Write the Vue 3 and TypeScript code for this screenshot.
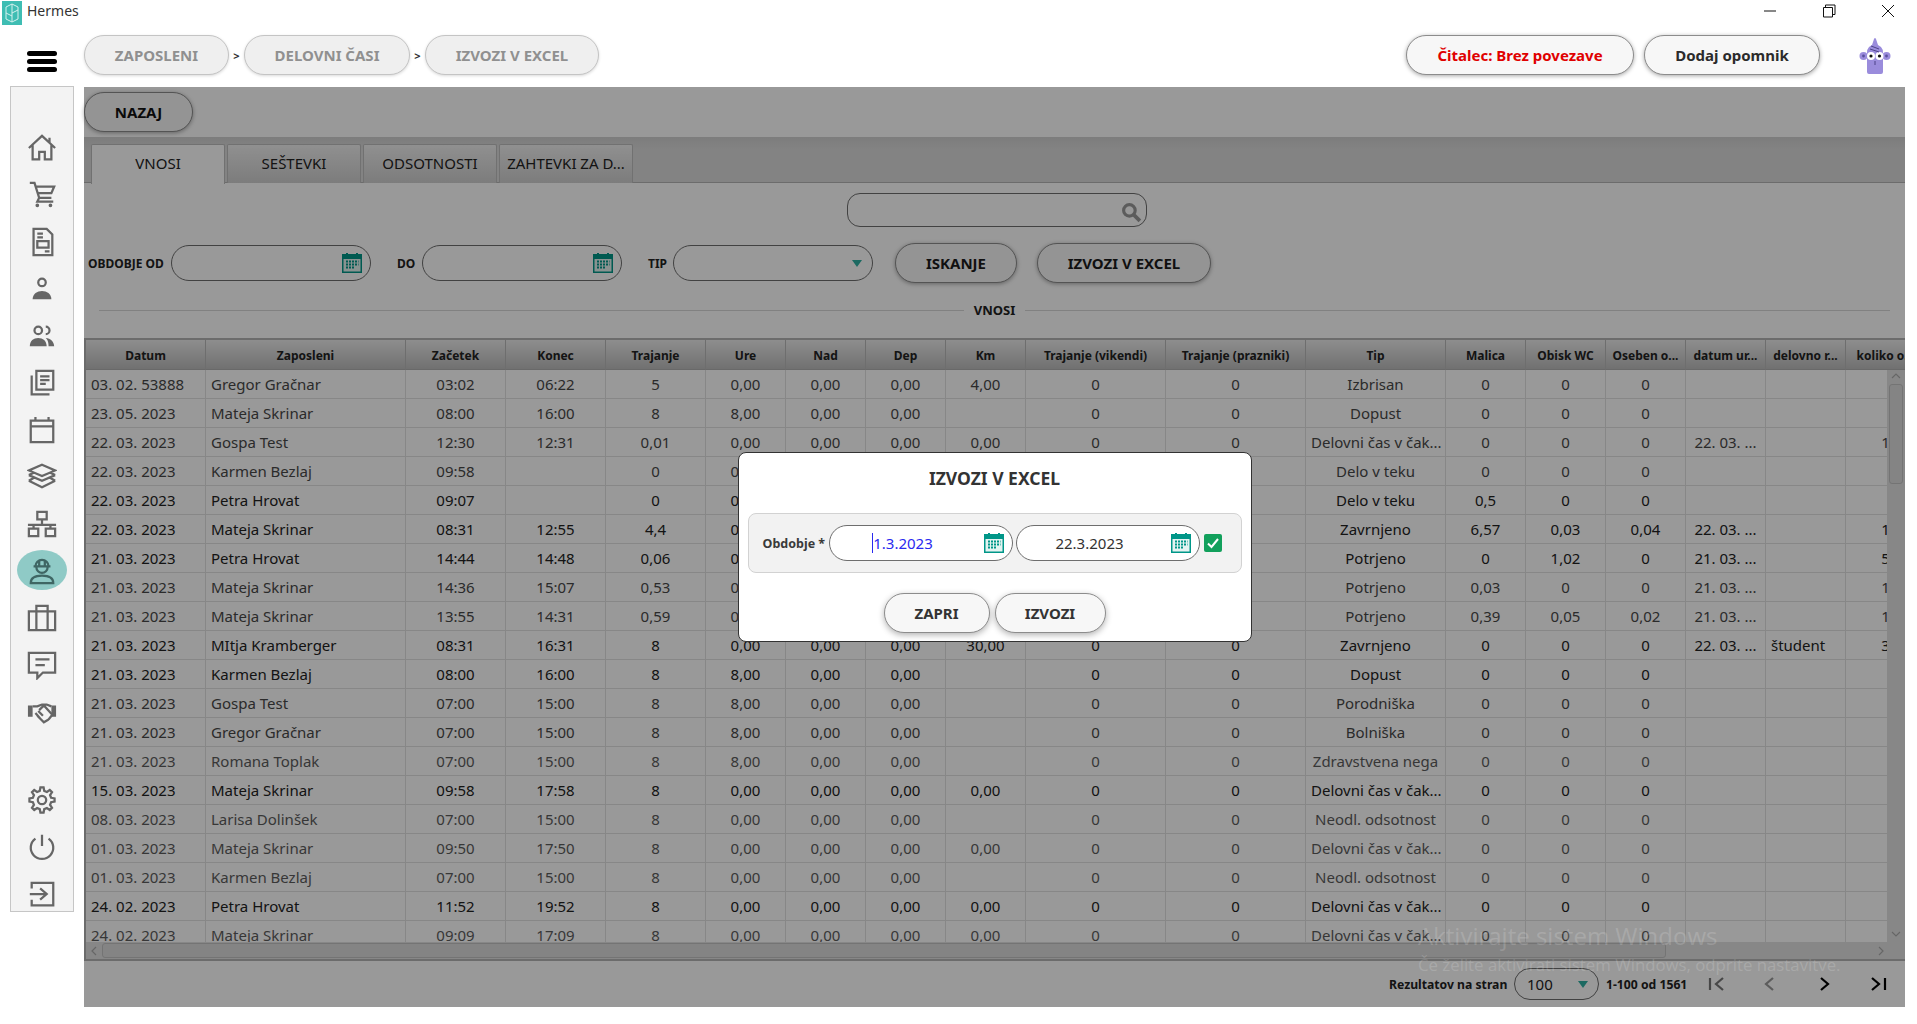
<template>
  <div class="app">
    <header class="titlebar">
      <div class="title-left">
        <svg class="logo" viewBox="0 0 20 24">
          <rect width="20" height="24" fill="#3fbdb3" />
          <path d="M10 3 L16 6 V18 L10 21 L4 18 V6 Z M10 3 V21 M4 12 L10 15 M16 9 L10 12" fill="none" stroke="#d5f1ee" stroke-width="1" />
        </svg>
        <span>Hermes</span>
      </div>
      <div class="win-controls">
        <svg class="win-btn" viewBox="0 0 14 14"><path d="M1 7 H13" /></svg>
        <svg class="win-btn" viewBox="0 0 14 14"><path d="M1.5 3.5 H10.5 V13 H1.5 Z M3.5 3.5 V1 H13 V10.5 H10.5" /></svg>
        <svg class="win-btn" viewBox="0 0 14 14"><path d="M1 1 L13 13 M13 1 L1 13" /></svg>
      </div>
    </header>

    <div class="toolbar">
      <div class="hamburger"><span></span><span></span><span></span></div>
      <nav class="crumbs">
        <template v-for="(c, i) in crumbs" :key="c.label">
          <span v-if="i > 0" class="crumb-sep">&gt;</span>
          <div class="pill crumb" :class="c.cls">{{ c.label }}</div>
        </template>
      </nav>
      <div class="top-actions">
        <button class="pill action red">Čitalec: Brez povezave</button>
        <button class="pill action dodaj">Dodaj opomnik</button>
        <svg class="avatar" viewBox="0 0 32 38">
          <path d="M13 8 L15 2 Q16 0 17 2 L19 8 L22 10 Q24 12 24 16 V35 Q24 37 22 37 H10 Q8 37 8 35 V16 Q8 12 10 10 Z" fill="#9a8cdc" />
          <circle cx="4.5" cy="19" r="4" fill="#9a8cdc" />
          <circle cx="27.5" cy="19" r="4" fill="#9a8cdc" />
          <circle cx="4.5" cy="19" r="1.4" fill="#5a4f9e" />
          <circle cx="27.5" cy="19" r="1.4" fill="#5a4f9e" />
          <circle cx="12" cy="19" r="4" fill="#fff" />
          <circle cx="20.5" cy="19" r="4" fill="#fff" />
          <circle cx="12" cy="19" r="1.6" fill="#111" />
          <circle cx="20.5" cy="19" r="1.6" fill="#111" />
          <path d="M16 24 V28 M12 9 L20 12 M11 12 L20 15" stroke="#4d4388" stroke-width="1" fill="none" />
        </svg>
      </div>
    </div>

    <div class="body-row">
      <aside class="sidebar">
        <div
          v-for="icon in sideIcons"
          :key="icon.name"
          class="side-item"
          :class="{ active: icon.active, 'push-down': icon.gap }"
        >
          <svg viewBox="0 0 32 32" class="side-icon">
            <path v-if="icon.fill" :d="icon.fill" class="icon-fill" />
            <path :d="icon.d" class="icon-line" />
          </svg>
        </div>
      </aside>

      <main class="main">
        <div class="back-row"><button class="pill nazaj">NAZAJ</button></div>

        <div class="tabs">
          <div v-for="(t, i) in tabs" :key="t" class="tab" :class="{ current: i === 0 }">{{ t }}</div>
        </div>

        <div class="search-row">
          <div class="search-box">
            <svg class="search-icon" viewBox="0 0 20 20">
              <circle cx="8" cy="8" r="5.5" />
              <path d="M12 12 L18 18" class="handle" />
            </svg>
          </div>
        </div>

        <div class="filter-row">
          <label class="f-label first">OBDOBJE OD</label>
          <div class="field wide">
            <svg class="cal" viewBox="0 0 20 20"><use href="#cal-icon" /></svg>
          </div>
          <label class="f-label do">DO</label>
          <div class="field wide">
            <svg class="cal" viewBox="0 0 20 20"><use href="#cal-icon" /></svg>
          </div>
          <label class="f-label tip">TIP</label>
          <div class="field wide"><span class="caret-down"></span></div>
          <button class="pill filter-btn iskanje">ISKANJE</button>
          <button class="pill filter-btn izvozi">IZVOZI V EXCEL</button>
        </div>

        <div class="divider"><span class="rule"></span><b>VNOSI</b><span class="rule"></span></div>

        <div class="grid-wrap">
          <div class="grid-view">
            <table class="grid">
              <colgroup>
                <col v-for="c in columns" :key="c.label" :style="{ width: c.width + 'px' }" />
              </colgroup>
              <thead>
                <tr><th v-for="c in columns" :key="c.label">{{ c.label }}</th></tr>
              </thead>
              <tbody>
                <tr v-for="(r, i) in rows" :key="i" :class="r.tone">
                  <td
                    v-for="(v, j) in r.cells"
                    :key="j"
                    :class="{ left: columns[j].left }"
                  >{{ v }}</td>
                </tr>
              </tbody>
            </table>
            <div class="vscroll">
              <svg class="sb-arrow" viewBox="0 0 12 8"><path d="M2 6 L6 2 L10 6" /></svg>
              <div class="vthumb"></div>
              <svg class="sb-arrow down" viewBox="0 0 12 8"><path d="M2 2 L6 6 L10 2" /></svg>
            </div>
          </div>
          <div class="hscroll">
            <svg class="sb-h" viewBox="0 0 8 12"><path d="M6 2 L2 6 L6 10" /></svg>
            <div class="hthumb"></div>
            <svg class="sb-h" viewBox="0 0 8 12"><path d="M2 2 L6 6 L2 10" /></svg>
          </div>
        </div>

        <footer class="pager">
          <span class="pager-text per-page">Rezultatov na stran</span>
          <div class="field page-size">100<span class="caret-down"></span></div>
          <span class="pager-text range">1-100 od 1561</span>
          <svg class="pg first-p" viewBox="0 0 18 18"><path d="M2 3 V15 M15 3 L8 9 L15 15" /></svg>
          <svg class="pg prev" viewBox="0 0 18 18"><path d="M12 3 L5 9 L12 15" /></svg>
          <svg class="pg next" viewBox="0 0 18 18"><path d="M6 3 L13 9 L6 15" /></svg>
          <svg class="pg last" viewBox="0 0 18 18"><path d="M3 3 L10 9 L3 15 M16 3 V15" /></svg>
        </footer>

        <div class="overlay">
          <div class="dialog">
            <h2>IZVOZI V EXCEL</h2>
            <div class="dlg-panel">
              <span class="dlg-label">Obdobje *</span>
              <div class="field date focus">
                <i class="text-cursor"></i>1.3.2023
                <svg class="cal" viewBox="0 0 20 20"><use href="#cal-icon" /></svg>
              </div>
              <div class="field date">
                22.3.2023
                <svg class="cal" viewBox="0 0 20 20"><use href="#cal-icon" /></svg>
              </div>
              <svg class="check" viewBox="0 0 18 18">
                <rect width="18" height="18" rx="2" fill="#12a05c" />
                <path d="M4 9.5 L7.5 13 L14 5" fill="none" stroke="#fff" stroke-width="2" />
              </svg>
            </div>
            <div class="dlg-buttons">
              <button class="pill dlg-btn zapri">ZAPRI</button>
              <button class="pill dlg-btn potrdi">IZVOZI</button>
            </div>
          </div>
        </div>

        <div class="watermark">
          <div class="wm-big">Aktivirajte sistem Windows</div>
          <div class="wm-small">Če želite aktivirati sistem Windows, odprite nastavitve.</div>
        </div>
      </main>
    </div>

    <svg class="defs" width="0" height="0">
      <symbol id="cal-icon" viewBox="0 0 20 20">
        <rect y="1" width="20" height="19" fill="#009688" />
        <rect x="1.5" y="6" width="17" height="12.5" fill="#e4f3f1" />
        <rect x="4" y="0" width="2" height="3" fill="#009688" />
        <rect x="14" y="0" width="2" height="3" fill="#009688" />
        <path d="M4 8.5 H16.5 M4 11.5 H16.5 M4 14.5 H13" stroke="#009688" stroke-width="1.8" stroke-dasharray="2 1" fill="none" />
      </symbol>
    </svg>
  </div>
</template>

<script setup lang="ts">
interface Column {
  label: string
  width: number
  left?: boolean
}

interface SideIcon {
  name: string
  d: string
  fill?: string
  active?: boolean
  gap?: boolean
}

type Tone = 'dark' | 'mid' | 'light'

const crumbs = [
  { label: 'ZAPOSLENI', cls: 'c1' },
  { label: 'DELOVNI ČASI', cls: 'c2' },
  { label: 'IZVOZI V EXCEL', cls: 'c3' }
]

const tabs = ['VNOSI', 'SEŠTEVKI', 'ODSOTNOSTI', 'ZAHTEVKI ZA D...']

const gearPath = (() => {
  const teeth = 8
  const pts: string[] = []
  for (let i = 0; i < teeth; i++) {
    const a = (i * Math.PI * 2) / teeth
    const step = Math.PI / teeth
    const list: [number, number][] = [
      [10, a - step * 0.62],
      [13.5, a - step * 0.32],
      [13.5, a + step * 0.32],
      [10, a + step * 0.62]
    ]
    for (const [r, t] of list) {
      pts.push(`${(16 + r * Math.cos(t)).toFixed(1)} ${(16 + r * Math.sin(t)).toFixed(1)}`)
    }
  }
  return `M${pts.join(' L')} Z M20.5 16 A4.5 4.5 0 1 1 11.5 16 A4.5 4.5 0 1 1 20.5 16 Z`
})()

const sideIcons: SideIcon[] = [
  { name: 'home', d: 'M2 16 L16 3 L30 16 M6 13 V28 H13 V20 H19 V28 H26 V13 M24 5 V10' },
  {
    name: 'cart',
    d: 'M3 3 H8 L13 19 H26 M9 7 H29 L26 14 H11 M13 19 L11 23 H28',
    fill: 'M9 27 a2 2 0 1 0 4 0 a2 2 0 1 0 -4 0 Z M23 27 a2 2 0 1 0 4 0 a2 2 0 1 0 -4 0 Z'
  },
  {
    name: 'doc',
    d: 'M7 2 H21 L27 8 V30 H7 Z M11 7 H17 M11 11 H17 M11 15 H23 V22 H11 Z M19 26 H24'
  },
  {
    name: 'person',
    d: 'M20 9 a4 4 0 1 1 -8 0 a4 4 0 1 1 8 0 Z M9 23 H23',
    fill: 'M6 27 C6 21 11 18 16 18 S26 21 26 27 Z'
  },
  {
    name: 'people',
    d: 'M16 10 a4 4 0 1 1 -8 0 a4 4 0 1 1 8 0 Z M20 6 a4 4 0 0 1 0 8',
    fill: 'M3 27 C3 21 7 18 12 18 S21 21 21 27 Z M23 27 C23 22 22 20 20 18 C25 18 29 22 29 27 Z'
  },
  { name: 'copies', d: 'M10 3 H28 V23 H10 Z M14 9 H24 M14 13 H24 M14 17 H20 M5 8 V28 H24' },
  { name: 'calendar', d: 'M4 6 H28 V29 H4 Z M4 12 H28 M9 2 V7 M23 2 V7' },
  { name: 'layers', d: 'M16 3 L30 9 L16 15 L2 9 Z M2 14 L16 20 L30 14 M2 14 L7 11.5 M30 14 L25 11.5 M2 20 L16 27 L30 20 M2 20 L7 17 M30 20 L25 17' },
  {
    name: 'network',
    d: 'M11 3 H21 V11 H11 Z M2 21 H12 V29 H2 Z M20 21 H30 V29 H20 Z M16 11 V17 M1 17 H31 M7 17 V21 M25 17 V21'
  },
  {
    name: 'worker',
    active: true,
    d: 'M9 11 a7 7 0 0 1 14 0 M7 11 H25 M13 5 V10 M19 5 V10 M10 12 a6 6 0 0 0 12 0 M4 29 C4 23 9 21 16 21 S28 23 28 29 Z'
  },
  { name: 'briefcase', d: 'M2 9 H30 V29 H2 Z M10 9 V3 H22 V9 M10 9 V29 M22 9 V29' },
  { name: 'chat', d: 'M2 3 H30 V24 H17 L11 30 V24 H2 Z M9 10 H24 M9 16 H19' },
  {
    name: 'handshake',
    d: 'M6 10 H11 L16 8 L21 8 L26 10 M13 14 L18 9 L27 19 L23 24 M11 20 L18 27 L23 24 M9 17 L14 23 M12 15 L17 20',
    fill: 'M1 9 H6 V21 H1 Z M26 9 H31 V21 H26 Z'
  },
  { name: 'gear', gap: true, d: gearPath },
  { name: 'power', d: 'M16 3 V15 M9 7 A12 12 0 1 0 23 7' },
  { name: 'exit', d: 'M5 10 V4 H28 V28 H5 V22 M3 16 H20 M14 10 L21 16 L14 22' }
]

const columns: Column[] = [
  { label: 'Datum', width: 120, left: true },
  { label: 'Zaposleni', width: 200, left: true },
  { label: 'Začetek', width: 100 },
  { label: 'Konec', width: 100 },
  { label: 'Trajanje', width: 100 },
  { label: 'Ure', width: 80 },
  { label: 'Nad', width: 80 },
  { label: 'Dep', width: 80 },
  { label: 'Km', width: 80 },
  { label: 'Trajanje (vikendi)', width: 140 },
  { label: 'Trajanje (prazniki)', width: 140 },
  { label: 'Tip', width: 140 },
  { label: 'Malica', width: 80 },
  { label: 'Obisk WC', width: 80 },
  { label: 'Oseben o...', width: 80 },
  { label: 'datum ur...', width: 80 },
  { label: 'delovno r...', width: 80, left: true },
  { label: 'koliko o...', width: 80 }
]

// 'datum|ime|od|do|traj|ure|km|tip|malica|wc|oseben|datum ur|delovno|koliko'
const raw: [Tone, string][] = [
  ['mid', '03. 02. 53888|Gregor Gračnar|03:02|06:22|5|0,00|4,00|Izbrisan|0|0|0|||'],
  ['mid', '23. 05. 2023|Mateja Skrinar|08:00|16:00|8|8,00||Dopust|0|0|0|||'],
  ['mid', '22. 03. 2023|Gospa Test|12:30|12:31|0,01|0,00|0,00|Delovni čas v čak...|0|0|0|22. 03. ...||1'],
  ['mid', '22. 03. 2023|Karmen Bezlaj|09:58||0|0,00||Delo v teku|0|0|0|||'],
  ['dark', '22. 03. 2023|Petra Hrovat|09:07||0|0,00||Delo v teku|0,5|0|0|||'],
  ['dark', '22. 03. 2023|Mateja Skrinar|08:31|12:55|4,4|0,00||Zavrnjeno|6,57|0,03|0,04|22. 03. ...||1'],
  ['dark', '21. 03. 2023|Petra Hrovat|14:44|14:48|0,06|0,00||Potrjeno|0|1,02|0|21. 03. ...||5'],
  ['mid', '21. 03. 2023|Mateja Skrinar|14:36|15:07|0,53|0,00||Potrjeno|0,03|0|0|21. 03. ...||1'],
  ['mid', '21. 03. 2023|Mateja Skrinar|13:55|14:31|0,59|0,00||Potrjeno|0,39|0,05|0,02|21. 03. ...||1'],
  ['dark', '21. 03. 2023|MItja Kramberger|08:31|16:31|8|0,00|30,00|Zavrnjeno|0|0|0|22. 03. ...|študent|3'],
  ['dark', '21. 03. 2023|Karmen Bezlaj|08:00|16:00|8|8,00||Dopust|0|0|0|||'],
  ['mid', '21. 03. 2023|Gospa Test|07:00|15:00|8|8,00||Porodniška|0|0|0|||'],
  ['mid', '21. 03. 2023|Gregor Gračnar|07:00|15:00|8|8,00||Bolniška|0|0|0|||'],
  ['light', '21. 03. 2023|Romana Toplak|07:00|15:00|8|8,00||Zdravstvena nega|0|0|0|||'],
  ['dark', '15. 03. 2023|Mateja Skrinar|09:58|17:58|8|0,00|0,00|Delovni čas v čak...|0|0|0|||'],
  ['light', '08. 03. 2023|Larisa Dolinšek|07:00|15:00|8|0,00||Neodl. odsotnost|0|0|0|||'],
  ['light', '01. 03. 2023|Mateja Skrinar|09:50|17:50|8|0,00|0,00|Delovni čas v čak...|0|0|0|||'],
  ['light', '01. 03. 2023|Karmen Bezlaj|07:00|15:00|8|0,00||Neodl. odsotnost|0|0|0|||'],
  ['dark', '24. 02. 2023|Petra Hrovat|11:52|19:52|8|0,00|0,00|Delovni čas v čak...|0|0|0|||'],
  ['light', '24. 02. 2023|Mateja Skrinar|09:09|17:09|8|0,00|0,00|Delovni čas v čak...|0|0|0|||']
]

const rows = raw.map(([tone, line]) => {
  const p = line.split('|')
  return {
    tone,
    // nad and dep are always 0,00 here, vikendi and prazniki always 0
    cells: [
      p[0], p[1], p[2], p[3], p[4], p[5], '0,00', '0,00', p[6], '0', '0',
      p[7], p[8], p[9], p[10], p[11], p[12], p[13]
    ]
  }
})
</script>

<style scoped>
.app {
  width: 1917px;
  height: 1024px;
  overflow: hidden;
  background: #fff;
  font-family: "Noto Sans", "Open Sans", sans-serif;
  color: #222;
}

.defs {
  position: absolute;
}

.titlebar {
  height: 24px;
  display: flex;
  justify-content: space-between;
}

.title-left {
  display: flex;
  align-items: flex-start;
  gap: 5px;
  padding-left: 2px;
  font-size: 14px;
  line-height: 22px;
  color: #333;
}

.logo {
  width: 20px;
  height: 24px;
  margin-top: 1px;
}

.win-controls {
  display: flex;
  gap: 45px;
  padding: 4px 22px 0 0;
}

.win-btn {
  width: 14px;
  height: 14px;
  fill: none;
  stroke: #111;
  stroke-width: 1;
}

.toolbar {
  height: 63px;
  display: flex;
  align-items: flex-start;
  padding-top: 11px;
  box-sizing: border-box;
}

.hamburger {
  width: 30px;
  margin: 16px 27px 0 27px;
  display: flex;
  flex-direction: column;
  gap: 3px;
}

.hamburger span {
  height: 5px;
  border-radius: 3px;
  background: #000;
}

.crumbs {
  display: flex;
  align-items: center;
}

.crumb-sep {
  width: 15px;
  text-align: center;
  font-size: 11px;
  font-weight: 700;
  color: #333;
}

.pill {
  box-sizing: border-box;
  display: flex;
  align-items: center;
  justify-content: center;
  border: 1px solid #8c8c8c;
  border-radius: 20px;
  background: #f7f7f7;
  box-shadow: 0 1px 4px rgba(0, 0, 0, 0.35);
  font-family: inherit;
  font-weight: 700;
  font-size: 15px;
  color: #2b2b2b;
  height: 40px;
  padding: 0;
}

.crumb {
  background: #efefef;
  border-color: #c4c4c4;
  color: #909090;
  box-shadow: 0 1px 3px rgba(0, 0, 0, 0.15);
}

.c1 { width: 145px; }
.c2 { width: 166px; }
.c3 { width: 174px; }

.top-actions {
  margin-left: auto;
  display: flex;
  align-items: flex-start;
}

.action {
  background: #f7f7f7;
}

.red {
  width: 228px;
  color: #e00000;
}

.dodaj {
  width: 176px;
  margin-left: 10px;
}

.avatar {
  width: 32px;
  height: 38px;
  margin: 2px 26px 0 39px;
}

.body-row {
  display: flex;
  align-items: flex-start;
}

.sidebar {
  box-sizing: border-box;
  width: 64px;
  height: 826px;
  margin: -1px 10px 0 10px;
  padding-top: 37px;
  background: #f3f3f3;
  border: 1px solid #c6c6c6;
  display: flex;
  flex-direction: column;
  align-items: center;
}

.side-item {
  width: 50px;
  height: 47px;
  flex: none;
  display: flex;
  align-items: center;
  justify-content: center;
  position: relative;
}

.side-item.active::before {
  content: "";
  position: absolute;
  left: 0;
  top: 3px;
  width: 50px;
  height: 40px;
  border-radius: 50%;
  background: #8fcac6;
}

.push-down {
  margin-top: 41px;
}

.side-icon {
  width: 30px;
  height: 30px;
  position: relative;
}

.icon-line {
  fill: none;
  stroke: #666;
  stroke-width: 2.4;
}

.icon-fill {
  fill: #666;
}

.active .icon-line {
  stroke: #3f6664;
}

.main {
  position: relative;
  width: 1821px;
  height: 920px;
  background: #fff;
  display: flex;
  flex-direction: column;
}

.back-row {
  height: 50px;
  padding-top: 5px;
  box-sizing: border-box;
}

.nazaj {
  width: 109px;
  font-size: 15px;
  color: #111;
}

.tabs {
  box-sizing: border-box;
  height: 46px;
  padding: 7px 0 0 7px;
  display: flex;
  gap: 2px;
  background: linear-gradient(#d0d0d0, #dadada 12px);
  border-bottom: 1px solid #b5b5b5;
}

.tab {
  width: 134px;
  height: 39px;
  box-sizing: border-box;
  padding-bottom: 3px;
  display: flex;
  align-items: center;
  justify-content: center;
  font-size: 15px;
  color: #222;
  background: linear-gradient(#f0f0f0, #cfcfcf);
  border: 1px solid #bcbcbc;
  border-bottom: none;
  border-radius: 2px 2px 0 0;
}

.tab.current {
  height: 40px;
  padding-bottom: 4px;
  background: #fff;
  position: relative;
}

.search-row {
  margin-top: 10px;
  padding-left: 763px;
}

.search-box {
  box-sizing: border-box;
  width: 300px;
  height: 34px;
  border: 1px solid #6e6e6e;
  border-radius: 13px;
  position: relative;
  background: #fff;
}

.search-icon {
  position: absolute;
  right: 4px;
  top: 8px;
  width: 21px;
  height: 21px;
  fill: none;
  stroke: #9a9a9a;
  stroke-width: 3;
}

.search-icon .handle {
  stroke-width: 3.5;
}

.filter-row {
  margin-top: 16px;
  height: 40px;
  display: flex;
  align-items: center;
}

.f-label {
  font-size: 12px;
  font-weight: 700;
  color: #222;
}

.first {
  margin-left: 4px;
  width: 83px;
}

.do {
  margin-left: 26px;
  width: 25px;
}

.tip {
  margin-left: 26px;
  width: 25px;
}

.field {
  box-sizing: border-box;
  border: 1px solid #6e6e6e;
  border-radius: 18px;
  height: 36px;
  background: #fff;
  position: relative;
  flex: none;
}

.wide {
  width: 200px;
}

.cal {
  position: absolute;
  right: 8px;
  top: 7px;
  width: 20px;
  height: 20px;
}

.caret-down {
  position: absolute;
  right: 10px;
  top: 50%;
  margin-top: -3px;
  border-left: 5px solid transparent;
  border-right: 5px solid transparent;
  border-top: 7px solid #2fb0a2;
}

.filter-btn {
  font-size: 15px;
  color: #1c1c1c;
}

.iskanje {
  width: 122px;
  margin-left: 22px;
}

.izvozi {
  width: 174px;
  margin-left: 20px;
}

.divider {
  margin-top: 17px;
  height: 20px;
  padding: 0 15px;
  display: flex;
  align-items: center;
  gap: 8px;
  font-size: 13px;
  color: #222;
}

.divider b {
  width: 45px;
  text-align: center;
}

.rule {
  flex: 1;
  height: 1px;
  background: #d8d8d8;
}

.grid-wrap {
  margin-top: 18px;
  height: 623px;
  flex: none;
  box-sizing: border-box;
  border-top: 2px solid #b5b5b5;
  border-left: 2px solid #b5b5b5;
  border-bottom: 2px solid #b5b5b5;
  display: flex;
  flex-direction: column;
  background: #fff;
}

.grid-view {
  position: relative;
  flex: 1;
  overflow: hidden;
}

.grid {
  table-layout: fixed;
  border-collapse: separate;
  border-spacing: 0;
  width: 1840px;
}

.grid th {
  box-sizing: border-box;
  height: 30px;
  padding: 2px 2px 0;
  background: linear-gradient(#ececec, #bcbcbc);
  border-right: 1px solid #b8b8b8;
  border-bottom: 1px solid #b0b0b0;
  font-size: 12px;
  font-weight: 700;
  color: #222;
  white-space: nowrap;
  overflow: hidden;
}

.grid td {
  box-sizing: border-box;
  height: 29px;
  padding: 0 5px;
  border-right: 1px solid #e1e1e1;
  border-bottom: 1px solid #e1e1e1;
  font-size: 15px;
  text-align: center;
  white-space: nowrap;
  overflow: hidden;
}

.grid td.left {
  text-align: left;
}

.dark td { color: #222; }
.mid td { color: #484848; }
.light td { color: #5c5c5c; }

.vscroll {
  position: absolute;
  right: 0;
  top: 30px;
  bottom: 0;
  width: 18px;
  background: #e2e2e2;
  display: flex;
  flex-direction: column;
  align-items: center;
}

.sb-arrow {
  width: 12px;
  height: 8px;
  margin-top: 2px;
  fill: none;
  stroke: #ababab;
  stroke-width: 1.2;
}

.sb-arrow.down {
  margin-top: auto;
  margin-bottom: 4px;
}

.vthumb {
  width: 14px;
  height: 100px;
  margin-top: 4px;
  box-sizing: border-box;
  background: #dcdcdc;
  border: 1px solid #c2c2c2;
  border-radius: 3px;
}

.hscroll {
  height: 17px;
  flex: none;
  background: #e2e2e2;
  display: flex;
  align-items: center;
  padding: 0 20px 0 4px;
}

.sb-h {
  width: 8px;
  height: 12px;
  fill: none;
  stroke: #ababab;
  stroke-width: 1.2;
}

.hthumb {
  width: 1564px;
  height: 15px;
  margin: 0 auto 0 4px;
  box-sizing: border-box;
  background: #dcdcdc;
  border: 1px solid #c2c2c2;
  border-radius: 3px;
}

.pager {
  flex: 1;
  display: flex;
  align-items: center;
  padding-left: 1305px;
}

.pager-text {
  font-size: 12.2px;
  font-weight: 700;
  color: #222;
  white-space: nowrap;
}

.per-page {
  width: 125px;
  flex: none;
}

.page-size {
  width: 85px;
  height: 32px;
  padding-left: 12px;
  display: flex;
  align-items: center;
  font-size: 15px;
  color: #222;
  border-radius: 16px;
}

.page-size .caret-down {
  right: 10px;
}

.range {
  margin-left: 7px;
  width: 78px;
  flex: none;
}

.pg {
  width: 18px;
  height: 18px;
  fill: none;
  stroke: #333;
  stroke-width: 2.2;
  flex: none;
}

.first-p { margin-left: 24px; stroke: #777; }
.prev { margin-left: 35px; stroke: #999; }
.next { margin-left: 36px; stroke: #000; }
.last { margin-left: 36px; stroke: #000; }

.overlay {
  position: absolute;
  inset: 0;
  background: rgba(0, 0, 0, 0.4);
  display: flex;
  align-items: center;
  justify-content: center;
}

.dialog {
  box-sizing: border-box;
  width: 514px;
  height: 190px;
  background: #fff;
  border: 1px solid #333;
  border-radius: 8px;
  padding: 10px 9px 0;
}

.dialog h2 {
  margin: 0;
  height: 30px;
  line-height: 30px;
  text-align: center;
  font-size: 17.5px;
  font-weight: 700;
  color: #333;
}

.dlg-panel {
  box-sizing: border-box;
  margin-top: 20px;
  height: 60px;
  background: #f2f2f2;
  border: 1px solid #d2d2d2;
  border-radius: 8px;
  display: flex;
  align-items: center;
  padding-left: 14px;
}

.dlg-label {
  width: 66px;
  font-size: 12.5px;
  font-weight: 700;
  color: #3a3a3a;
  white-space: nowrap;
}

.date {
  width: 184px;
  padding-right: 36px;
  display: flex;
  align-items: center;
  justify-content: center;
  font-size: 15px;
  color: #333;
}

.date + .date {
  margin-left: 3px;
}

.focus {
  color: #2a2af0;
}

.text-cursor {
  width: 1px;
  height: 20px;
  background: #2a2af0;
}

.check {
  width: 18px;
  height: 18px;
  margin-left: 4px;
}

.dlg-buttons {
  margin-top: 20px;
  display: flex;
  justify-content: center;
  gap: 5px;
}

.dlg-btn {
  font-size: 15px;
  color: #333;
  box-shadow: 0 2px 6px rgba(0, 0, 0, 0.3);
}

.zapri { width: 106px; }
.potrdi { width: 111px; }

.watermark {
  position: absolute;
  left: 1334px;
  top: 832px;
  color: rgba(255, 255, 255, 0.17);
  font-family: "Open Sans", sans-serif;
  white-space: nowrap;
}

.wm-big {
  font-size: 24px;
  line-height: 34px;
}

.wm-small {
  font-size: 16.8px;
  line-height: 24px;
}
</style>

<style>
html,
body {
  margin: 0;
  background: #fff;
}
</style>
